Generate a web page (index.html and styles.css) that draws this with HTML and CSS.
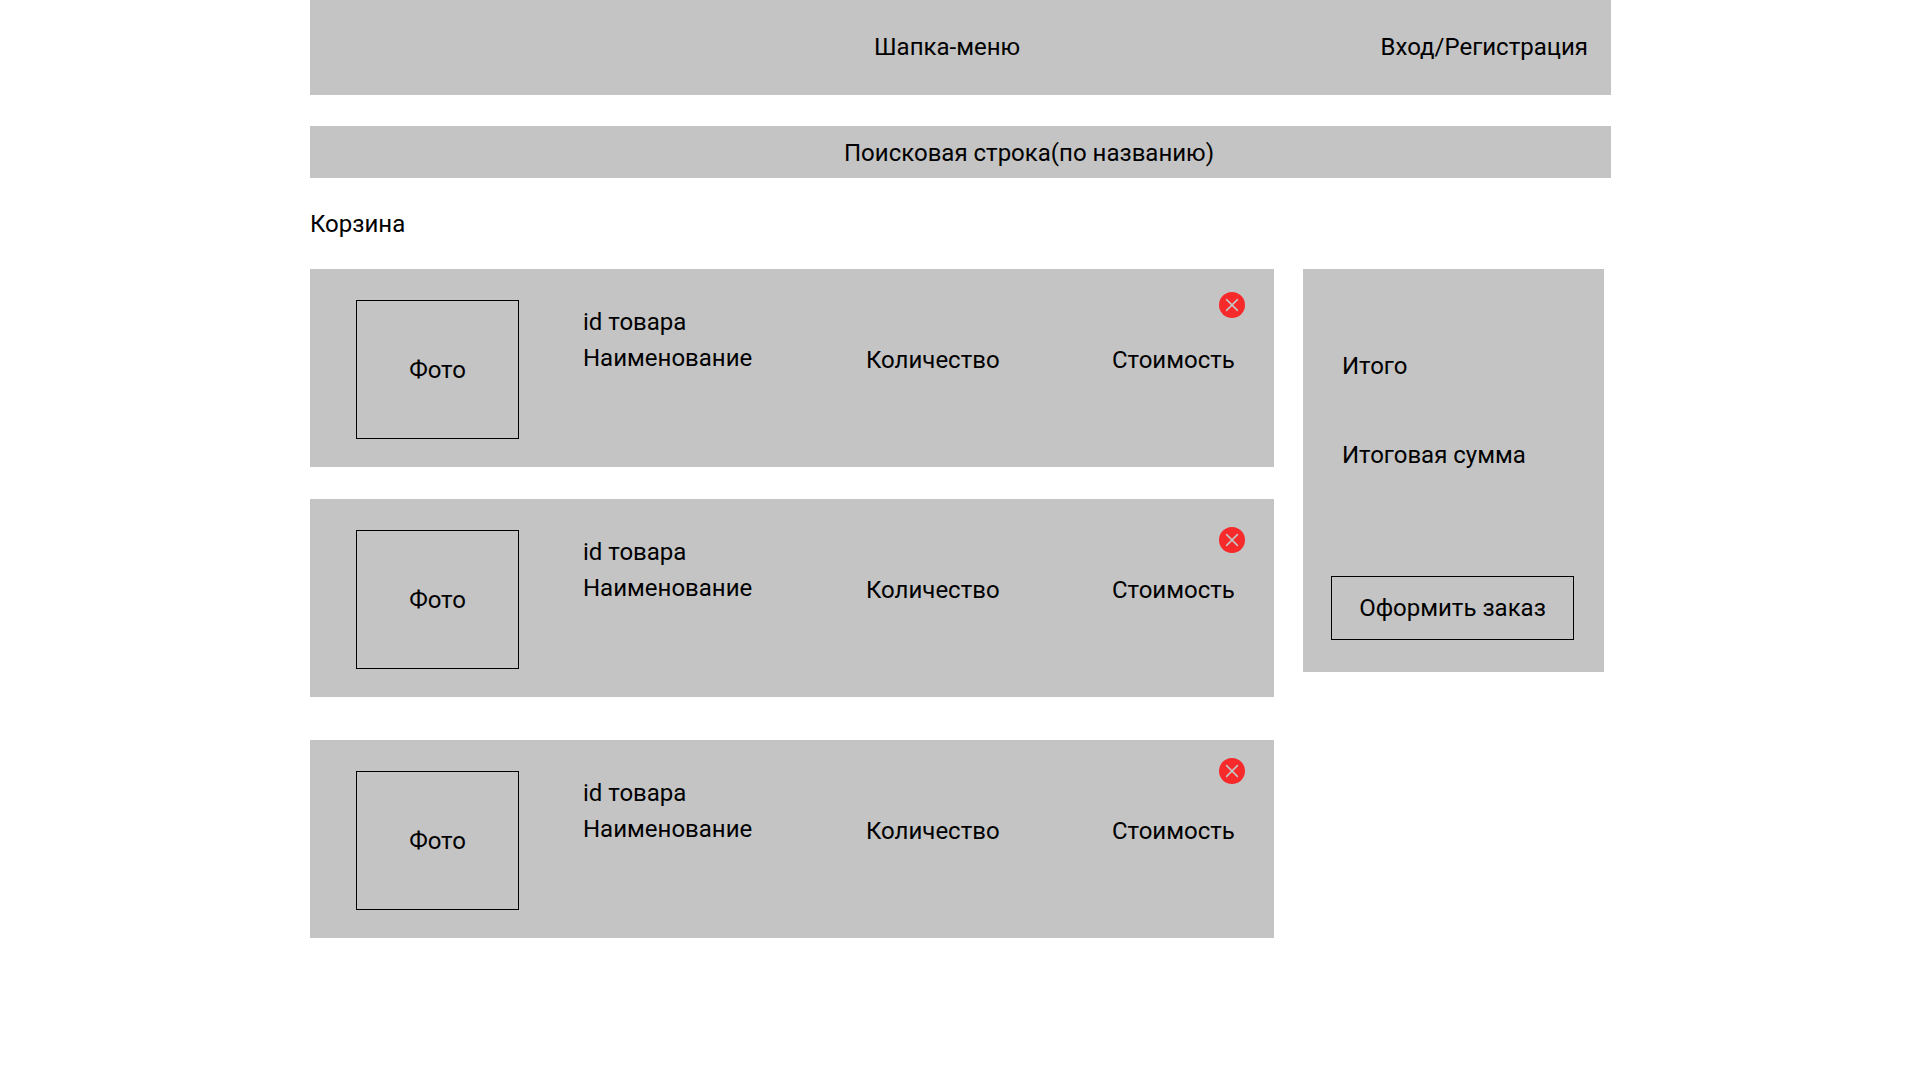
FILE: index.html
```html
<!DOCTYPE html>
<html lang="ru">
<head>
  <meta charset="utf-8">
  <meta name="viewport" content="width=device-width, initial-scale=1">
  <title>Корзина</title>
  <link rel="stylesheet" href="styles.css">
</head>
<body>
  <div class="page">
    <header class="header">
      <div class="header-row">
        <span>Шапка-меню</span>
        <a class="login" href="#">Вход/Регистрация</a>
      </div>
    </header>

    <form class="search" role="search">
      <input class="search-input" type="search" aria-label="Поиск по названию" placeholder="Поисковая строка(по названию)">
    </form>

    <main>
      <h1 class="title">Корзина</h1>
      <div class="cart">
        <ul class="items">
          <li class="card">
            <div class="photo">Фото</div>
            <div class="info"><span>id товара</span><span>Наименование</span></div>
            <div class="cell">Количество</div>
            <div class="cell">Стоимость</div>
            <button class="delete" type="button" aria-label="Удалить">
              <svg class="delete-icon" viewBox="0 0 26 26"><circle cx="13" cy="13" r="13" fill="#f62a2a"/><path d="M7.6 7.6l10.8 10.8M18.4 7.6L7.6 18.4" stroke="#c4c4c4" stroke-width="1.6" stroke-linecap="round"/></svg>
            </button>
          </li>
          <li class="card card-low">
            <div class="photo">Фото</div>
            <div class="info"><span>id товара</span><span>Наименование</span></div>
            <div class="cell">Количество</div>
            <div class="cell">Стоимость</div>
            <button class="delete" type="button" aria-label="Удалить">
              <svg class="delete-icon" viewBox="0 0 26 26"><circle cx="13" cy="13" r="13" fill="#f62a2a"/><path d="M7.6 7.6l10.8 10.8M18.4 7.6L7.6 18.4" stroke="#c4c4c4" stroke-width="1.6" stroke-linecap="round"/></svg>
            </button>
          </li>
          <li class="card card-high">
            <div class="photo">Фото</div>
            <div class="info"><span>id товара</span><span>Наименование</span></div>
            <div class="cell">Количество</div>
            <div class="cell">Стоимость</div>
            <button class="delete" type="button" aria-label="Удалить">
              <svg class="delete-icon" viewBox="0 0 26 26"><circle cx="13" cy="13" r="13" fill="#f62a2a"/><path d="M7.6 7.6l10.8 10.8M18.4 7.6L7.6 18.4" stroke="#c4c4c4" stroke-width="1.6" stroke-linecap="round"/></svg>
            </button>
          </li>
        </ul>

        <aside class="summary">
          <div class="totals"><span>Итого</span><span>Итоговая сумма</span></div>
          <button class="order" type="button">Оформить заказ</button>
        </aside>
      </div>
    </main>
  </div>
</body>
</html>
```
FILE: styles.css
```css
* {
  box-sizing: border-box;
}

body {
  margin: 0;
  background: #fff;
  color: #000;
  font: 400 24px/28px Roboto, "Liberation Sans", sans-serif;
}

button,
input {
  padding: 0;
  border: 0;
  background: none;
  color: inherit;
  font: inherit;
}

button {
  cursor: pointer;
}

.page {
  padding: 0 309px 48px 310px;
}

.header {
  padding: 33px 23px 34px 0;
  background: #c4c4c4;
}

.header-row {
  display: grid;
  grid-template-columns: 564fr 714fr;
}

.header-row > span {
  grid-column: 2;
  grid-row: 1;
}

.login {
  grid-column: 2;
  grid-row: 1;
  justify-self: end;
  color: inherit;
  text-decoration: none;
}

.search {
  display: grid;
  grid-template-columns: 534fr 767fr;
  margin-top: 31px;
  padding: 13px 0 11px;
  background: #c4c4c4;
}

.search-input {
  grid-column: 2;
  height: 28px;
  min-width: 0;
  appearance: none;
  outline: 0;
}

.search-input::placeholder {
  color: #000;
  opacity: 1;
}

.title {
  margin: 32px 0 31px;
  font-size: 24px;
  font-weight: 400;
}

.cart {
  display: grid;
  grid-template-columns: 1fr 301px;
  align-items: start;
  gap: 29px;
  padding-right: 7px;
}

.items {
  margin: 0;
  padding: 0;
  list-style: none;
}

.card {
  position: relative;
  display: grid;
  grid-template-columns: 227px 283fr 246fr 162fr;
  margin-bottom: 32px;
  padding: 31px 0 28px 46px;
  background: #c4c4c4;
}

.photo {
  display: grid;
  place-items: center;
  width: 163px;
  height: 139px;
  border: 1px solid #000;
}

.info {
  display: grid;
  align-content: start;
  gap: 8px;
  padding-top: 8px;
}

.cell {
  padding-top: 46px;
}

.delete {
  position: absolute;
  top: 23px;
  right: 29px;
  width: 26px;
  height: 26px;
}

.delete-icon {
  display: block;
}

.card-low {
  margin-bottom: 43px;
}

.card-low .delete {
  top: 28px;
}

.card-high .delete {
  top: 18px;
}

.summary {
  padding: 83px 30px 32px 28px;
  background: #c4c4c4;
}

.totals {
  display: grid;
  gap: 61px;
  padding-left: 11px;
}

.order {
  width: 100%;
  height: 64px;
  margin-top: 107px;
  border: 1px solid #000;
}

@media (max-width: 1700px) {
  .page {
    padding-right: 24px;
    padding-left: 24px;
  }
}

@media (max-width: 1200px) {
  .cart {
    grid-template-columns: 1fr;
  }
}
```
